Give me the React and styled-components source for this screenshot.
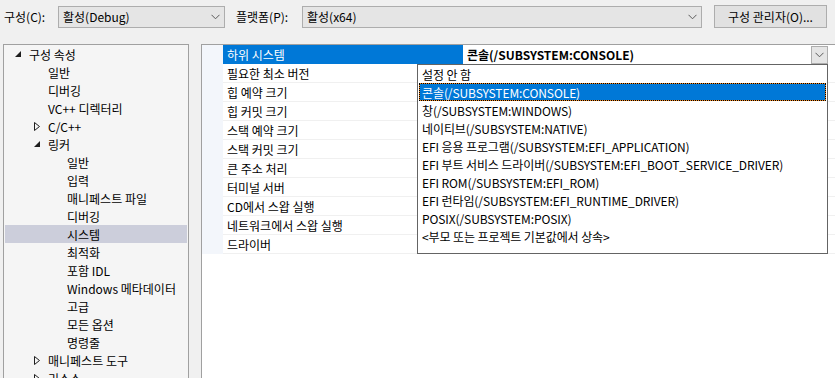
import styled, { createGlobalStyle } from 'styled-components';

const GlobalStyle = createGlobalStyle`
  html, body {
    margin: 0;
    padding: 0;
    background: #f0f0f0;
  }
  * { box-sizing: border-box; }
`;

const FONT = `"Noto Sans CJK KR", "Noto Sans", sans-serif`;

const treeItems = [
  { label: '구성 속성', level: 0, arrow: 'open' },
  { label: '일반', level: 1 },
  { label: '디버깅', level: 1 },
  { label: 'VC++ 디렉터리', level: 1 },
  { label: 'C/C++', level: 1, arrow: 'closed' },
  { label: '링커', level: 1, arrow: 'open' },
  { label: '일반', level: 2 },
  { label: '입력', level: 2 },
  { label: '매니페스트 파일', level: 2 },
  { label: '디버깅', level: 2 },
  { label: '시스템', level: 2, selected: true },
  { label: '최적화', level: 2 },
  { label: '포함 IDL', level: 2 },
  { label: 'Windows 메타데이터', level: 2 },
  { label: '고급', level: 2 },
  { label: '모든 옵션', level: 2 },
  { label: '명령줄', level: 2 },
  { label: '매니페스트 도구', level: 1, arrow: 'closed' },
  { label: '리소스', level: 1, arrow: 'closed' },
];

const properties = [
  '하위 시스템',
  '필요한 최소 버전',
  '힙 예약 크기',
  '힙 커밋 크기',
  '스택 예약 크기',
  '스택 커밋 크기',
  '큰 주소 처리',
  '터미널 서버',
  'CD에서 스왑 실행',
  '네트워크에서 스왑 실행',
  '드라이버',
];

const options = [
  '설정 안 함',
  '콘솔(/SUBSYSTEM:CONSOLE)',
  '창(/SUBSYSTEM:WINDOWS)',
  '네이티브(/SUBSYSTEM:NATIVE)',
  'EFI 응용 프로그램(/SUBSYSTEM:EFI_APPLICATION)',
  'EFI 부트 서비스 드라이버(/SUBSYSTEM:EFI_BOOT_SERVICE_DRIVER)',
  'EFI ROM(/SUBSYSTEM:EFI_ROM)',
  'EFI 런타임(/SUBSYSTEM:EFI_RUNTIME_DRIVER)',
  'POSIX(/SUBSYSTEM:POSIX)',
  '<부모 또는 프로젝트 기본값에서 상속>',
];

function Chevron() {
  return (
    <svg width="9" height="6" viewBox="0 0 9 6">
      <polyline points="0.5,0.8 4.5,4.8 8.5,0.8" fill="none" stroke="#5a5a5a" strokeWidth="1" />
    </svg>
  );
}

function TreeArrow({ type }) {
  if (type === 'open') {
    return (
      <svg width="6" height="6" viewBox="0 0 6 6">
        <polygon points="6,0 6,6 0,6" fill="#1e1e1e" />
      </svg>
    );
  }
  return (
    <svg width="6" height="9" viewBox="0 0 6 9">
      <polygon points="0.5,0.5 5.5,4.5 0.5,8.5" fill="none" stroke="#1e1e1e" strokeWidth="1" />
    </svg>
  );
}

function App() {
  return (
    <Page>
      <GlobalStyle />
      <TopBar>
        <BarLabel>구성(C):</BarLabel>
        <Combo $width={167}>
          <span>활성(Debug)</span>
          <Chevron />
        </Combo>
        <BarLabel $left={11}>플랫폼(P):</BarLabel>
        <Combo $width={400}>
          <span>활성(x64)</span>
          <Chevron />
        </Combo>
        <Button>구성 관리자(O)...</Button>
      </TopBar>
      <Main>
        <TreePanel>
          {treeItems.map((item, i) => (
            <TreeRow key={i} $level={item.level} $selected={item.selected}>
              <ArrowSlot>{item.arrow && <TreeArrow type={item.arrow} />}</ArrowSlot>
              <span>{item.label}</span>
            </TreeRow>
          ))}
        </TreePanel>
        <GridPanel>
          <Grid>
            {properties.map((name, i) => (
              <GridRow key={name}>
                <Gutter />
                <Label $active={i === 0}>{name}</Label>
                {i === 0 ? (
                  <ValueEditor>
                    <ValueText>콘솔(/SUBSYSTEM:CONSOLE)</ValueText>
                    <DropButton>
                      <Chevron />
                    </DropButton>
                  </ValueEditor>
                ) : (
                  <Value />
                )}
              </GridRow>
            ))}
          </Grid>
          <DropList>
            {options.map((opt, i) => (
              <Option key={opt} $selected={i === 1}>{opt}</Option>
            ))}
          </DropList>
        </GridPanel>
      </Main>
    </Page>
  );
}

const Page = styled.div`
  width: 835px;
  height: 378px;
  overflow: hidden;
  background: #f0f0f0;
  font-family: ${FONT};
  font-size: 12px;
  color: #000;
  display: flex;
  flex-direction: column;
`;

const TopBar = styled.div`
  display: flex;
  align-items: center;
  height: 44px;
  padding: 0 8px 11px 4px;
  flex-shrink: 0;
`;

const BarLabel = styled.span`
  margin-left: ${p => p.$left || 0}px;
  width: ${p => (p.$left ? 66 : 54)}px;
  white-space: nowrap;
`;

const Combo = styled.div`
  width: ${p => p.$width}px;
  height: 22px;
  background: #e5e5e5;
  border: 1px solid #adadad;
  display: flex;
  align-items: center;
  justify-content: space-between;
  padding: 0 4px 0 4px;
  span { white-space: nowrap; }
`;

const Button = styled.div`
  margin-left: 12px;
  width: 113px;
  height: 23px;
  background: #e1e1e1;
  border: 1px solid #adadad;
  display: flex;
  align-items: center;
  justify-content: center;
  white-space: nowrap;
`;

const Main = styled.div`
  flex: 1;
  display: flex;
  gap: 12px;
  padding: 0 0 0 3px;
  min-height: 0;
`;

const TreePanel = styled.div`
  width: 186px;
  height: 360px;
  background: #f5f5f5;
  border: 1px solid #a0a0a0;
  padding: 0 1px;
  flex-shrink: 0;
`;

const TreeRow = styled.div`
  height: 18px;
  display: flex;
  align-items: center;
  padding-left: ${p => 9 + p.$level * 19}px;
  background: ${p => (p.$selected ? '#cccedb' : 'transparent')};
  white-space: nowrap;
`;

const ArrowSlot = styled.span`
  width: 15px;
  display: flex;
  align-items: center;
  justify-content: flex-start;
  padding-left: 1px;
`;

const GridPanel = styled.div`
  position: relative;
  flex: 1;
  height: 360px;
  background: #fff;
  border: 1px solid #a0a0a0;
  border-right: none;
`;

const Grid = styled.div`
  display: flex;
  flex-direction: column;
`;

const GridRow = styled.div`
  display: flex;
  height: 19px;
`;

const Gutter = styled.div`
  width: 21px;
  background: #f3f6fb;
  flex-shrink: 0;
`;

const Label = styled.div`
  width: 240px;
  flex-shrink: 0;
  padding-left: 4px;
  display: flex;
  align-items: center;
  white-space: nowrap;
  background: ${p => (p.$active ? '#0078d7' : '#fff')};
  color: ${p => (p.$active ? '#fff' : '#000')};
  border-bottom: 1px solid ${p => (p.$active ? '#0078d7' : '#f0f0f0')};
`;

const Value = styled.div`
  flex: 1;
  border-bottom: 1px solid #f0f0f0;
`;

const ValueEditor = styled.div`
  flex: 1;
  display: flex;
  align-items: center;
  justify-content: space-between;
  padding-left: 4px;
  margin-right: 7px;
`;

const ValueText = styled.span`
  font-weight: bold;
  white-space: nowrap;
`;

const DropButton = styled.div`
  width: 17px;
  height: 18px;
  background: #e5e5e5;
  border: 1px solid #adadad;
  display: flex;
  align-items: center;
  justify-content: center;
`;

const DropList = styled.div`
  position: absolute;
  left: 215px;
  top: 19px;
  width: 411px;
  height: 190px;
  background: #fff;
  border: 1px solid #646464;
  padding: 0 1px;
`;

const Option = styled.div`
  height: 18px;
  display: flex;
  align-items: center;
  padding-left: 3px;
  white-space: nowrap;
  letter-spacing: -0.1px;
  background: ${p => (p.$selected ? '#0078d7' : 'transparent')};
  color: ${p => (p.$selected ? '#fff' : '#000')};
  outline: ${p => (p.$selected ? '1px dotted #000' : 'none')};
  outline-offset: -1px;
  box-shadow: ${p => (p.$selected ? 'inset 0 0 0 1px #f08a24' : 'none')};
`;

export default App;
